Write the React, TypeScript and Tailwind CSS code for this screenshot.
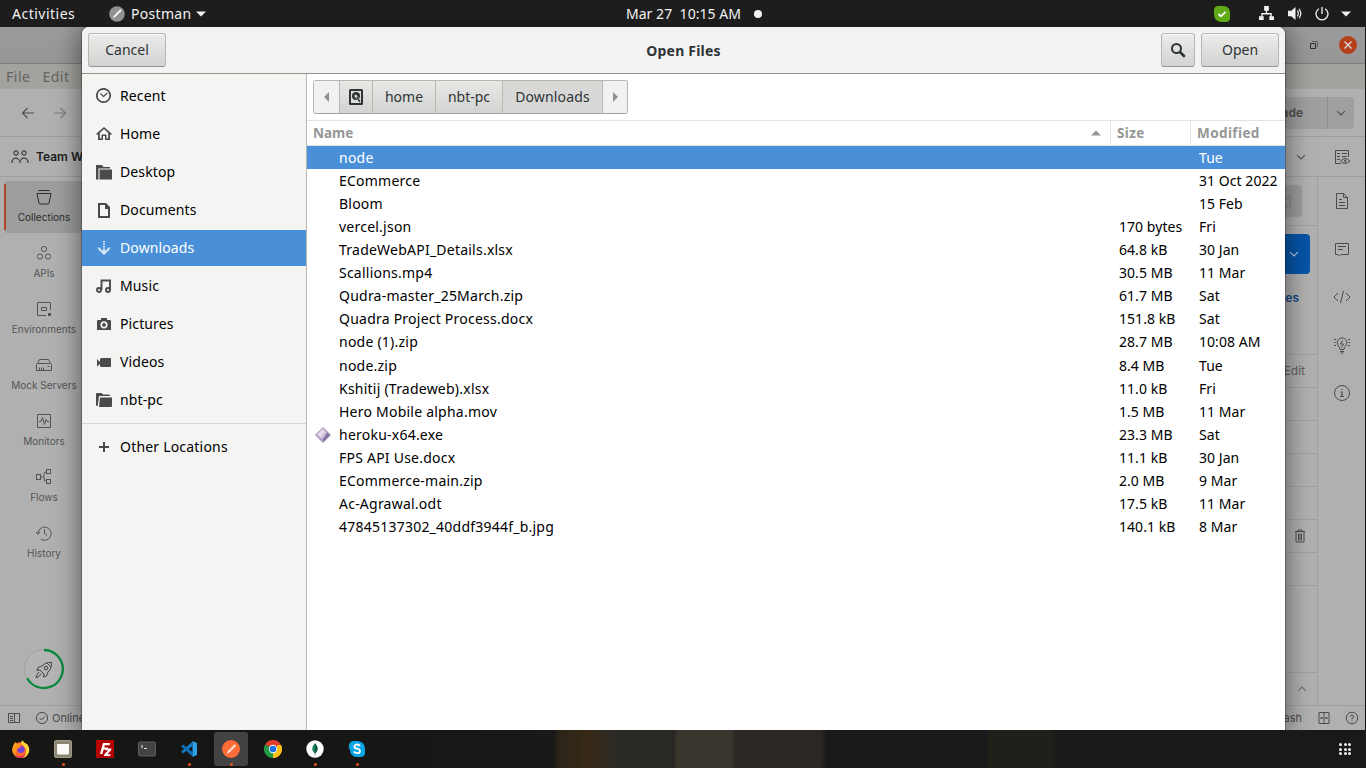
import type { ReactNode } from "react";

type IconProps = { children: ReactNode; size?: number; className?: string; box?: number };

function Line({ children, size = 18, className = "", box = 18 }: IconProps) {
  return (
    <svg width={size} height={size} viewBox={`0 0 ${box} ${box}`} fill="none" stroke="currentColor" strokeWidth="1" className={`shrink-0 ${className}`}>
      {children}
    </svg>
  );
}

function Solid({ children, size = 16, className = "", box = 16 }: IconProps) {
  return (
    <svg width={size} height={size} viewBox={`0 0 ${box} ${box}`} fill="currentColor" className={`shrink-0 ${className}`}>
      {children}
    </svg>
  );
}

function TopBar() {
  return (
    <header className="grid h-[27px] shrink-0 grid-cols-[1fr_auto_1fr] items-center bg-[#1d1d1d] text-[14px] leading-[27px] text-[#f2f2f2]">
      <div className="flex items-center">
        <span className="w-[109px] pl-3 tracking-[0.5px]">Activities</span>
        <svg width="16" height="16" viewBox="0 0 16 16" className="mr-1.5">
          <circle cx="8" cy="8" r="7.8" fill="#929292" />
          <path d="M3.6 12.4 5 9.8 11.4 3.3 12.6 4.6 6.2 11Z" fill="#fff" />
        </svg>
        <span className="tracking-[0.3px]">Postman</span>
        <svg width="10" height="6" viewBox="0 0 10 6" className="ml-[5px]"><path d="M0 .5h10L5 5.5z" fill="#f2f2f2" /></svg>
      </div>
      <div className="flex items-center pl-[22px]">
        <span className="whitespace-pre tracking-[0.05px]">Mar 27  10:15 AM</span>
        <span className="ml-[13px] size-2 rounded-full bg-[#f2f2f2]" />
      </div>
      <div className="flex items-center justify-end pr-[15px]">
        <svg width="16" height="16" viewBox="0 0 16 16" className="mr-[29px]">
          <path d="M4 0h5c5 0 7 3 7 7v5c0 3-2 4-4 4H8C3 16 0 13 0 8V4c0-3 2-4 4-4z" fill="#61a917" />
          <path d="m4.500 8 2.400 2.300 4.700-4.400" stroke="#fff" strokeWidth="1.800" fill="none" />
        </svg>
        <Solid size={15} className="mr-[14px]">
          <path d="M5.500 0h5v5H8.700v2.500h4.900V11H16v4h-5v-4h1.200V9H3.800v2H5v4H0v-4h2.400V7.500h4.900V5H5.500z" />
        </Solid>
        <Solid size={15} className="mr-[12px]">
          <path d="M0 5h3.500L8 1v14l-4.500-4H0z" />
          <path d="M10 5q2 3 0 6M11.700 3q4 5 0 10" fill="none" stroke="currentColor" strokeWidth="1.300" />
        </Solid>
        <Solid size={14} className="mr-[12px]">
          <path d="M8 0v8M4.500 2a6.800 6.800 0 1 0 7 0" fill="none" stroke="currentColor" strokeWidth="1.500" />
        </Solid>
        <svg width="10" height="6" viewBox="0 0 10 6"><path d="M0 .5h10L5 5.500z" fill="#f2f2f2" /></svg>
      </div>
    </header>
  );
}

const railItems: { label: string; icon: ReactNode }[] = [
  { label: "Collections", icon: <Line><path d="M3.500 2.500h11M2 5.500h14l-2 9.500q-.2 1-1 1H5q-.8 0-1-1z" /></Line> },
  { label: "APIs", icon: <Line><circle cx="9" cy="5" r="2.600" /><circle cx="5" cy="12.500" r="2.600" /><circle cx="13" cy="12.500" r="2.600" /></Line> },
  { label: "Environments", icon: <Line><path d="M11 15.500H2.500v-13h13V10M6.500 7.500h5v3h-5z" /><path d="M13 13h3v3h-3z" fill="currentColor" stroke="none" /></Line> },
  { label: "Mock Servers", icon: <Line><path d="M1.500 8.500q0-1 1-1h13q1 0 1 1v6h-15zM2.500 7.500l2-4h9l2 4M4.500 14.500v-3M6.500 14.500v-3M8.500 14.500v-3M12.500 10.500h2" /></Line> },
  { label: "Monitors", icon: <Line><rect x="2.500" y="2.500" width="13" height="13" /><path d="M4 9.500h2l1.500-4 2 7 1.500-5 1 2h2" /></Line> },
  { label: "Flows", icon: <Line><rect x="1.500" y="6.500" width="4" height="5" /><rect x="11.500" y="1.500" width="4" height="4" /><rect x="11.500" y="11.500" width="4" height="4" /><path d="M5.500 9h2q1.500 0 1.500-2t1-3h1.500M9 9v2q0 2.500 2.500 2.500" /></Line> },
  { label: "History", icon: <Line><path d="M3 10a6.600 6.600 0 1 1 3 5.200M1 8l2 2.300L5 8M9.500 5v4.500l2.500 2" /></Line> },
];

function Rail() {
  return (
    <nav className="flex w-[88px] shrink-0 flex-col items-stretch gap-1 bg-[#b0b0b0] pt-1 text-[10px] text-[#545454]">
      {railItems.map((item, i) => (
        <div
          key={item.label}
          className={`flex h-[52px] flex-col items-center ${i === 0 ? "ml-1 rounded bg-[#9d9d9d] pr-1 text-[#2b2b2b]" : ""}`}
        >
          <div className="relative flex w-full flex-col items-center pt-[7px]">
            {i === 0 && <span className="absolute top-[3px] left-0 h-[46px] w-0.5 bg-[#b4472a]" />}
            {item.icon}
            <span className="mt-[3px] leading-4 whitespace-nowrap">{item.label}</span>
          </div>
        </div>
      ))}
      <div className="mt-auto mb-[15px] flex justify-center">
        <svg width="42" height="42" viewBox="0 0 42 42" fill="none">
          <circle cx="21" cy="21" r="19.500" fill="#b4b4b4" stroke="#a0a0a0" />
          <path d="M21 2a19 19 0 1 1-16.800 28.200" stroke="#078a3b" strokeWidth="2.300" />
          <path d="M28.500 14.500q-6-.5-9.500 3.500l-4 1.500-1 3 3-.5 4 4-.5 3 3-1 1.500-4q4-3.500 3.500-9.500zM16 24l-2.500 3.500-.5 2 2-.5L18.500 26M28 19l-4-4" stroke="#424242" />
          <circle cx="23" cy="20" r="1.800" stroke="#424242" />
        </svg>
      </div>
    </nav>
  );
}

function PostmanWindow() {
  return (
    <div className="flex h-full w-[1365px] flex-col bg-[#b0b0b0] font-['Inter',sans-serif] text-[#4c4c4c]">
      <div className="flex h-[37px] shrink-0 items-center justify-end gap-[20px] border-b border-[#7e7e7e] bg-gradient-to-b from-[#9b9b9b] to-[#969696] pr-2">
        <svg width="10" height="10" viewBox="0 0 10 10" fill="none"><path d="M1.500 3.500h5v5h-5z" stroke="#2d2d2d" /><path d="M3 1.500h5.500V7" stroke="#5d5d5d" /></svg>
        <svg width="18" height="18" viewBox="0 0 18 18"><circle cx="9" cy="9" r="9" fill="#b5401b" /><path d="m5.500 5.500 7 7m0-7-7 7" stroke="#ddd" strokeWidth="1.300" /></svg>
      </div>
      <div className="flex h-[25px] shrink-0 items-center gap-3 bg-[#a2a29f] pl-1.5 font-['Noto_Sans',sans-serif] text-[14px] tracking-[0.5px] text-[#656561]">
        <span>File</span><span>Edit</span>
      </div>
      <div className="flex h-12 shrink-0 items-center justify-between border-b border-[#9e9e9e] pr-[11px] pl-[19px]">
        <div className="flex gap-[14px]">
          <Line><path d="M15 9H3.500M8.500 4l-5 5 5 5" strokeWidth="1.100" /></Line>
          <Line className="text-[#7a7a7a]"><path d="M3 9h11.500M9.500 4l5 5-5 5" strokeWidth="1.100" /></Line>
        </div>
        <div className="flex h-8 w-[114px] items-center rounded bg-[#9f9f9f] text-[12px] font-semibold">
          <span className="w-[88px] border-r border-[#8f8f8f] pr-[24px] text-right leading-8">Upgrade</span>
          <Line size={14} className="ml-1.5"><path d="m4 6.500 5 5 5-5" strokeWidth="1.300" /></Line>
        </div>
      </div>
      <div className="flex h-10 shrink-0 items-center justify-between border-b border-[#9e9e9e] pr-[14px] pl-[11px]">
        <div className="flex items-center gap-[7px] text-[12px] font-semibold text-[#202020]">
          <Line><circle cx="5" cy="5" r="2.200" /><circle cx="13" cy="5" r="2.200" /><path d="M1 15v-2q1-3 4-3 2 0 3 2.500M17 15v-2q-1-3-4-3-3 0-4 3v2" /></Line>
          Team Workspace
        </div>
        <div className="flex items-center gap-[25px]">
          <Line size={14}><path d="m4 6.500 5 5 5-5" strokeWidth="1.300" /></Line>
          <Line><path d="M8 15.500H2.500v-13h13V9M4 5.500h3M9 5.500h5M4 8.500h3M9 8.500h5M4 11.500h3" /><path d="M7.500 13q4.500-5 9.500 0-5 5-9.500 0z" /><circle cx="12.200" cy="13" r="1" /></Line>
        </div>
      </div>
      <div className="flex min-h-0 flex-1">
        <Rail />
        <main className="flex min-w-0 flex-1 flex-col border-r border-[#a0a0a0]">
          <div className="flex h-[49px] shrink-0 items-center justify-end border-b border-[#a0a0a0] pr-[15px]">
            <div className="flex h-8 w-10 items-center justify-end rounded bg-[#9d9d9d] pr-2.5 text-[#7c7c7c]"><Line size={14}><path d="M3 2.500h12.500v13H3zM9 6.500h4" /></Line></div>
          </div>
          <div className="flex h-[129px] shrink-0 flex-col items-end border-b border-[#a0a0a0]">
            <div className="mt-2 mr-[7px] flex h-10 w-12 items-center justify-end rounded bg-[#0655a8] pr-[9px] text-[#c2d5e9]"><Line size={14}><path d="m4 6.500 5 5 5-5" strokeWidth="1.300" /></Line></div>
            <span className="mt-[14px] mr-[18px] text-[12px] leading-5 font-semibold text-[#164685]">Cookies</span>
          </div>
          <div className="flex h-[33px] shrink-0 items-center justify-end border-b border-[#a0a0a0] pr-3 text-[12px] text-[#606060]">Bulk Edit</div>
          {[0, 1, 2, 3].map((n) => <div key={n} className="h-[33px] shrink-0 border-b border-[#a0a0a0]" />)}
          <div className="flex h-[33px] shrink-0 items-center justify-end border-b border-[#a0a0a0] pr-2">
            <Line><path d="M4 4.500h10M7 4V3h4v1M5 5v10h8V5M7.500 6.500v7M9 6.500v7M10.500 6.500v7" /></Line>
          </div>
          <div className="h-[33px] shrink-0 border-b border-[#a0a0a0]" />
          <div className="flex-1" />
          <div className="flex h-[33px] shrink-0 items-center justify-end border-t border-[#a0a0a0] pr-2">
            <Line size={14} className="text-[#6c6c6c]"><path d="m4 11.500 5-5 5 5" strokeWidth="1.300" /></Line>
          </div>
        </main>
        <aside className="flex w-[47px] shrink-0 flex-col items-center gap-[30px] pt-[15px]">
          <Line><path d="M3.500 1.500h7l4 4v11h-11zM10.500 1.500v4h4M6 7.500h3M6 10.500h6M6 13.500h6" /></Line>
          <Line><path d="M2.500 3.500h13v11H8l-1.500 1.500L5 14.500H2.500zM5 6.500h8M5 9.500h5" /></Line>
          <Line><path d="m5 5-4 4 4 4M13 5l4 4-4 4M10.500 3l-3 12" /></Line>
          <Line><path d="M7 13.500q0-2-1.500-3.500a4.800 4.800 0 1 1 7 0Q11 11.500 11 13.500zM7 15.500h4M7.500 17h3M9.500 4.500 7.500 8h3L8.500 11.500M1 3.500h2M1 6.500h1.500M1 9.500h2M15 3.500h2M15.500 6.500H17M15 9.500h2" /></Line>
          <Line><circle cx="9" cy="9" r="7.500" /><path d="M7.500 8H9v4.500M7 12.500h4M8.500 5.500h1.200" strokeWidth="1.200" /></Line>
        </aside>
      </div>
      <footer className="flex h-[25px] shrink-0 items-center justify-between border-t border-[#9f9f9f] pr-[6px] pl-[7px] text-[11px]">
        <div className="flex items-center">
          <Line size={14} box={14}><path d="M1.500 2.500h11v9h-11zM7.500 2.500v9M3 5.500h3M3 7.500h3M3 9.500h3" /></Line>
          <Line size={14} box={14} className="mr-[3px] ml-[14px]"><circle cx="7" cy="7" r="5.600" /><path d="m4.500 7 2 2 3.500-3.500" /></Line>
          Online
        </div>
        <div className="flex items-center">
          Trash
          <Line size={14} box={14} className="mr-[14px] ml-[15px]"><path d="M2 1.500h10v11H2zM7 1.500v11M3 7h3M8 7h3M5 6v2M9 6v2" /></Line>
          <Line size={14} box={14}><circle cx="7" cy="7" r="5.800" /><path d="M5.300 5.700Q5.500 4.200 7 4.200t1.700 1.500Q8.500 6.800 7 7.300V8.500M7 9.500v1" /></Line>
        </div>
      </footer>
    </div>
  );
}

const places: { label: string; icon: ReactNode }[] = [
  { label: "Recent", icon: <g fill="none" stroke="currentColor"><circle cx="7.500" cy="7.500" r="6.700" strokeWidth="1.700" /><path d="m4.500 5.500 3 3L11.500 5" strokeWidth="1.100" /></g> },
  { label: "Home", icon: <path d="M8 1 0 8l1.300 1L2 8.300V14h5v-4h2v4h5V8.300l.7.700L16 8zM8 3l4.200 4v5.400h-1.700V8.500h-5v3.900H3.800V7z" /> },
  { label: "Desktop", icon: <path d="M0 1h6l1.500 2H14v1.500H2.500V15.500H0zM3.500 5.500H16v10H3.500z" /> },
  { label: "Documents", icon: <path fillRule="evenodd" d="M2 1h8l4 4v11H2zM4 3v11h8V7H9V3z" /> },
  { label: "Downloads", icon: <path d="M7 1h2v1.500H7zM7 3.500h2V5H7zM7 6h2v1.500H7zM7 8.500h2V11l3.500-3.500H14V9l-6 6-6-6V7.500h1.500L7 11z" /> },
  { label: "Music", icon: <g fill="none" stroke="currentColor" strokeWidth="1.900"><circle cx="3" cy="12" r="2" /><circle cx="12" cy="12" r="2" /><path d="M5.500 12V2.500H14V12" /></g> },
  { label: "Pictures", icon: <path fillRule="evenodd" d="M5 2h6v2h3q1 0 1 1v9H1V5q0-1 1-1h3zM8 5.200a3.600 3.600 0 1 0 0 7.200 3.600 3.600 0 0 0 0-7.200zM8 7a1.900 1.900 0 1 1 0 3.800A1.900 1.900 0 0 1 8 7z" /> },
  { label: "Videos", icon: <path d="M1 5 4 8V5.500Q4 4 5.500 4H14q1 0 1 1v7q0 1-1 1H5.500Q4 13 4 11.500V10l-3 2.500z" /> },
  { label: "nbt-pc", icon: <path d="M0 2q0-1 1-1h4.500L7 2.500h6q1 0 1 1.500H3L1.700 14H1q-1 0-1-1zM4 5.500h12V14q0 1-1 1H3z" /> },
];

function Places() {
  return (
    <aside className="flex w-[225px] shrink-0 flex-col border-r border-[#b6b6b3] bg-[#f4f4f2] pt-1">
      <ul className="flex flex-col gap-0.5">
        {places.map((p) => {
          const active = p.label === "Downloads";
          return (
            <li key={p.label} className={`flex h-9 items-center gap-2 pl-[14px] ${active ? "bg-[#4a90d9] text-white" : "text-black"}`}>
              <Solid className={active ? "text-[#d5e5f6]" : "text-[#4a4a48]"}>{p.icon}</Solid>
              <span className="pb-0.5 tracking-[0.12px]">{p.label}</span>
            </li>
          );
        })}
      </ul>
      <div className="mt-[5px] mb-[5px] h-px shrink-0 bg-[#d7d7d5]" />
      <div className="flex h-9 items-center gap-2 pl-[14px] text-black">
        <Solid className="text-[#4a4a48]"><path d="M7 3h2v4h4v2H9v4H7V9H3V7h4z" /></Solid>
        <span className="pb-0.5 tracking-[0.2px]">Other Locations</span>
      </div>
    </aside>
  );
}

const files: [string, string, string][] = [
  ["node", "", "Tue"],
  ["ECommerce", "", "31 Oct 2022"],
  ["Bloom", "", "15 Feb"],
  ["vercel.json", "170 bytes", "Fri"],
  ["TradeWebAPI_Details.xlsx", "64.8 kB", "30 Jan"],
  ["Scallions.mp4", "30.5 MB", "11 Mar"],
  ["Qudra-master_25March.zip", "61.7 MB", "Sat"],
  ["Quadra Project Process.docx", "151.8 kB", "Sat"],
  ["node (1).zip", "28.7 MB", "10:08 AM"],
  ["node.zip", "8.4 MB", "Tue"],
  ["Kshitij (Tradeweb).xlsx", "11.0 kB", "Fri"],
  ["Hero Mobile alpha.mov", "1.5 MB", "11 Mar"],
  ["heroku-x64.exe", "23.3 MB", "Sat"],
  ["FPS API Use.docx", "11.1 kB", "30 Jan"],
  ["ECommerce-main.zip", "2.0 MB", "9 Mar"],
  ["Ac-Agrawal.odt", "17.5 kB", "11 Mar"],
  ["47845137302_40ddf3944f_b.jpg", "140.1 kB", "8 Mar"],
];

function FileList() {
  return (
    <div className="flex flex-col">
      <div className="grid h-[26px] grid-cols-[804px_80px_94px] border-y border-[#e3e3e2] text-[13.5px] leading-6 font-bold text-[#949796]">
        <div className="flex items-center justify-between border-r border-[#e3e3e2] pr-[9px] pl-1.5">
          Name
          <svg width="10" height="6" viewBox="0 0 10 6"><path d="M0 5.500h10L5 .5z" fill="#949796" /></svg>
        </div>
        <div className="border-r border-[#e3e3e2] pl-1.5 tracking-[0.4px]">Size</div>
        <div className="pl-1.5 tracking-[0.4px]">Modified</div>
      </div>
      {files.map(([name, size, modified], i) => (
        <div
          key={name}
          className={`grid h-[23px] grid-cols-[32px_780px_80px_86px] items-center leading-[23px] whitespace-nowrap ${i === 0 ? "bg-[#4a90d9] text-white" : "text-black"} ${i === 9 ? "mt-px" : ""}`}
        >
          <span className="pl-2">
            {name.endsWith(".exe") && (
              <svg width="16" height="16" viewBox="0 0 16 16">
                <path d="M8 .5 15.500 8 8 15.500.5 8z" fill="#b8a9cc" stroke="#8e819e" strokeWidth=".8" />
                <path d="M8 1.500 2 7.500 6 11l5-5z" fill="#e2dae9" /><path d="m8 15 7-7-3-2-4 6z" fill="#84709f" />
                <path d="M7 12V8l3-3v4z" fill="#cec0dc" />
              </svg>
            )}
          </span>
          <span className="tracking-[0.23px]">{name}</span>
          <span className="tracking-[0.05px]">{size}</span>
          <span className="tracking-[0.05px]">{modified}</span>
        </div>
      ))}
    </div>
  );
}

const button =
  "flex h-[34px] items-center justify-center rounded-[3px] border border-[#b6b6b3] border-b-[#95958f] bg-gradient-to-b from-[#ececeb] to-[#d3d3d1] pb-px text-[#2e3436] shadow-[inset_0_1px_#f8f8f8]";
const crumb = "flex items-center justify-center border-r border-[#b6b6b3] bg-gradient-to-b from-[#e8e8e7] to-[#d3d3d1]";

function OpenDialog() {
  return (
    <section className="absolute top-0 left-[82px] flex h-full w-[1203px] flex-col overflow-visible rounded-t-[7px] bg-white text-[14px] shadow-[0_3px_24px_3px_rgba(0,0,0,0.45),0_0_0_1px_rgba(0,0,0,0.25)]">
      <div className="grid h-[47px] shrink-0 grid-cols-[1fr_auto_1fr] items-center rounded-t-[7px] border-b border-[#93938c] bg-[#f3f3f3] px-1.5">
        <button className={`${button} w-[78px]`}>Cancel</button>
        <span className="text-[14px] font-bold tracking-[0.2px] text-[#2e3436]">Open Files</span>
        <div className="flex justify-end gap-1.5">
          <button className={`${button} w-[34px]`}>
            <svg width="16" height="16" viewBox="0 0 16 16" fill="none" stroke="#2e3436"><circle cx="6.500" cy="6.500" r="4.500" strokeWidth="2" /><path d="m10 10 4 4" strokeWidth="2.600" strokeLinecap="round" /></svg>
          </button>
          <button className={`${button} w-[78px]`}><span className="pb-px">Open</span></button>
        </div>
      </div>
      <div className="flex min-h-0 flex-1">
        <Places />
        <div className="flex min-w-0 flex-1 flex-col">
          <div className="flex h-[46px] shrink-0 items-start pt-1.5 pl-1.5">
            <div className="flex h-[34px] w-[315px] overflow-hidden rounded-[3px] border border-[#b6b6b3] border-b-[#a2a29e] text-[#2e3436]">
              <div className="flex w-[26px] items-center justify-center border-r border-[#b6b6b3] bg-[#f1f1f1]"><svg width="5" height="10" viewBox="0 0 5 10"><path d="M5 0v10L0 5z" fill="#8f9190" /></svg></div>
              <div className={`${crumb} w-[33px]`}>
                <svg width="16" height="16" viewBox="0 0 16 16"><rect x="1" y="0" width="14" height="16" rx="1.500" fill="#2e3436" /><rect x="3" y="2" width="10" height="12" fill="#dededc" /><circle cx="8" cy="7" r="4" fill="#2e3436" /><path d="m8 7.500 4 4.500" stroke="#dededc" strokeWidth="2.600" /><path d="m8.500 7.500 3.500 5.500" stroke="#2e3436" strokeWidth="1.400" /><circle cx="7.800" cy="7" r="1.300" fill="#e2e2e0" /></svg>
              </div>
              <div className={`${crumb} w-[63px] pb-0.5`}>home</div>
              <div className={`${crumb} w-[67px] pb-0.5`}>nbt-pc</div>
              <div className="flex w-[100px] items-center justify-center border-r border-[#b6b6b3] bg-[#d8d8d6] pb-0.5 tracking-[0.15px]">Downloads</div>
              <div className="flex flex-1 items-center justify-center bg-[#f1f1f1]"><svg width="5" height="10" viewBox="0 0 5 10"><path d="M0 0v10l5-5z" fill="#8f9190" /></svg></div>
            </div>
          </div>
          <FileList />
        </div>
      </div>
    </section>
  );
}

const apps: { name: string; running?: boolean; active?: boolean; icon: ReactNode }[] = [
  {
    name: "Firefox",
    icon: (
      <>
        <circle cx="9" cy="10" r="8" fill="#ff6b2c" />
        <path d="M10 0q2 3 5 4 3 4 2 8-2 5-6 6 4-5 3-9-2-4-5-5z" fill="#ffd83a" />
        <path d="M1 6 3 2q3 3 6 2L4 11q-1 5 4 7-7-1-8-8z" fill="#ff9a1f" />
        <path d="M2 12q2 5 7 4 4-1 5-4-1 6-6 6-5-1-6-6z" fill="#ee2a62" />
        <circle cx="9" cy="9.500" r="3.600" fill="#7542d5" /><path d="M4 6q3-1 5 1-2 2-5 1z" fill="#ff8b22" />
      </>
    ),
  },
  { name: "Files", running: true, icon: <><rect x=".5" y=".5" width="17" height="17" rx="1.500" fill="#8b8574" stroke="#a29c89" /><rect x="3" y="4" width="12" height="10.500" rx="1" fill="#faf9f5" /></> },
  { name: "FileZilla", icon: <><path d="M0 0h18v18H0z" fill="#b50404" /><path d="M4 14 7 3h7l-.5 2.200H8.800L8.200 7.500h4L11.700 9.500H7.700L6.400 14zM9.500 8.500h6l-.4 1.700-3.800 4h3.300l-.5 1.900H8l.5-2 3.700-3.800H9z" fill="#fff" /></> },
  { name: "Terminal", icon: <><rect x=".5" y="2" width="17" height="14" rx="1.500" fill="#434343" stroke="#6a6a6a" strokeWidth=".8" /><path d="m3 5 2 1.500L3 8M6 8.500h3" stroke="#ddd" fill="none" /></> },
  { name: "Code", running: true, icon: <><path d="M12.500 1.500V6L3 13.500 1 11.800z" fill="#1178c4" /><path d="M12.500 16.500V12L3 4.500 1 6.200z" fill="#0f6cb5" /><path d="M12.500 1 17 3v12l-4.500 2z" fill="#2c9fe8" /></> },
  { name: "Postman", running: true, active: true, icon: <><circle cx="9" cy="9" r="9" fill="#ff6c37" /><path d="M4.500 14 6.500 10.500 12.500 4.300 14 5.800 8 11.800z" fill="#fff" /><path d="M7 11 13 5" stroke="#ff6c37" strokeWidth=".5" /></> },
  { name: "Chrome", icon: <><path d="M9 9 1.200 4.500A9 9 0 0 1 16.800 4.500z" fill="#e33b2e" /><path d="M9 9 9 18A9 9 0 0 1 1.200 4.500z" fill="#249a45" /><path d="M9 9h7.800v-4.500A9 9 0 0 1 9 18z" fill="#fbc116" /><path d="M13 5h3.800A9 9 0 0 1 9 18l4-7z" fill="#fbc116" /><circle cx="9" cy="9" r="4.200" fill="#fff" /><circle cx="9" cy="9" r="3.300" fill="#1a73e8" /></> },
  { name: "Compass", running: true, icon: <><circle cx="9" cy="9" r="8.700" fill="#fff" /><path d="M9 3q-5.500 6 0 11z" fill="#16835b" /><path d="M9 3q5.500 6 0 11z" fill="#07563e" /><path d="M8.700 13h.6v2.500h-.6z" fill="#888" /></> },
  { name: "Skype", running: true, icon: <><path d="M6 1h4q7 1 7 8v4q0 4-5 4-10 1-10-7-2-2-1-5 1-4 5-4z" fill="#0ba5e5" /><path d="M12 6q-1-1.500-3-1.500T6.300 6.500Q6.300 8.200 9 8.700q3 .5 3 2.500 0 2-3 2-2.200 0-3.200-1.700" fill="none" stroke="#fff" strokeWidth="1.800" /></> },
];

function Dock() {
  return (
    <footer className="flex h-[38px] shrink-0 items-center justify-between bg-[linear-gradient(90deg,#161615_0px,#161614_380px,#191917_553px,#2b2519_560px,#382a16_590px,#2c2a25_612px,#292825_674px,#38352d_677px,#39362e_732px,#2c2925_735px,#2c2723_820px,#17191a_828px,#17191b_986px,#211f19_989px,#211f19_1050px,#17191a_1058px,#18191b_1366px)] pr-[15px]">
      <div className="flex">
        {apps.map((a) => (
          <div key={a.name} className="flex w-[42px] justify-center">
            <div className={`relative flex size-[34px] items-center justify-center rounded-[3px] ${a.active ? "bg-[#434343]" : ""}`}>
              <svg width="18" height="18" viewBox="0 0 18 18">{a.icon}</svg>
              {a.running && <span className="absolute bottom-0 left-4 size-[3px] rounded-full bg-[#e95420]" />}
            </div>
          </div>
        ))}
      </div>
      <div className="grid grid-cols-3 gap-[1.5px]">
        {Array.from({ length: 9 }, (_, i) => <span key={i} className="size-[3px] rounded-[1.500px] bg-[#f0f0f0]" />)}
      </div>
    </footer>
  );
}

export default function App() {
  return (
    <div className="flex h-[768px] w-[1366px] flex-col overflow-hidden bg-[#141414] font-['Noto_Sans',sans-serif]">
      <TopBar />
      <div className="relative h-[703px] shrink-0 overflow-hidden">
        <PostmanWindow />
        <OpenDialog />
      </div>
      <Dock />
    </div>
  );
}
